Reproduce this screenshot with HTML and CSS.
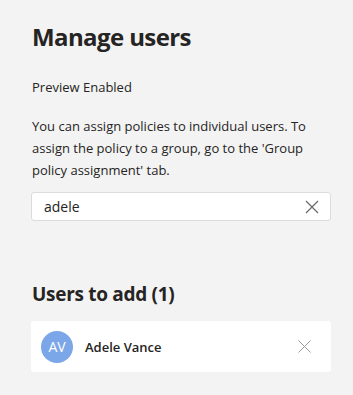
FILE: index.html
```html
<!DOCTYPE html>
<html lang="en">
<head>
    <meta charset="UTF-8">
    <meta name="viewport" content="width=device-width, initial-scale=1.0">
    <title>Manage users</title>
    <link rel="stylesheet" href="styles.css">
</head>
<body>
    <div class="panel">
        <h1 class="title">Manage users</h1>
        <p class="preview">Preview Enabled</p>
        <p class="intro">You can assign policies to individual users. To assign the policy to a group, go to the 'Group policy assignment' tab.</p>

        <div class="search">
            <input class="search-input" type="text" value="adele">
            <button class="clear-btn" aria-label="Clear">
                <svg width="14" height="14" viewBox="0 0 14 14"><path d="M1 1L13 13M13 1L1 13" stroke="#6b6b6b" stroke-width="1.3" fill="none"/></svg>
            </button>
        </div>

        <h2 class="subtitle">Users to add (1)</h2>
        <div class="user-card">
            <div class="avatar">AV</div>
            <div class="user-name">Adele Vance</div>
            <button class="remove-btn" aria-label="Remove">
                <svg width="13" height="13" viewBox="0 0 13 13"><path d="M0.5 0.5L12.5 12.5M12.5 0.5L0.5 12.5" stroke="#9a9a9a" stroke-width="1" fill="none"/></svg>
            </button>
        </div>
    </div>
</body>
</html>
```

FILE: styles.css
```css
body {
    margin: 0;
    background: #f3f3f3;
    font-family: "Open Sans", "Noto Sans", Arial, sans-serif;
    color: #252423;
}
.panel {
    width: 300px;
    padding: 21px 22px 0 31px;
}
.title {
    margin: 0 0 0 1px;
    font-size: 24px;
    font-weight: 700;
    letter-spacing: -0.6px;
    line-height: 32px;
}
.preview {
    margin: 24px 0 0 1px;
    font-size: 13px;
    line-height: 20px;
}
.intro {
    margin: 18px 0 0 1px;
    font-size: 13px;
    line-height: 22px;
}
.search {
    margin-top: 11px;
    height: 27px;
    display: flex;
    align-items: center;
    background: white;
    border: 1px solid #dcdcdc;
    border-radius: 3px;
}
.search-input {
    flex: 1;
    border: none;
    outline: none;
    background: transparent;
    font-family: inherit;
    font-size: 14px;
    color: #252423;
    padding: 0 0 0 12px;
    height: 100%;
}
.clear-btn, .remove-btn {
    border: none;
    background: none;
    padding: 0;
    display: flex;
    cursor: pointer;
}
.clear-btn {
    margin-right: 11px;
}
.subtitle {
    margin: 60px 0 0 1px;
    font-size: 19px;
    font-weight: 700;
    letter-spacing: -0.3px;
    line-height: 26px;
}
.user-card {
    margin-top: 14px;
    height: 51px;
    display: flex;
    align-items: center;
    background: white;
    border-radius: 3px;
    padding: 0 20px 0 10px;
}
.avatar {
    width: 32px;
    height: 32px;
    border-radius: 50%;
    background: #7ba6e8;
    color: white;
    font-size: 14px;
    display: flex;
    align-items: center;
    justify-content: center;
}
.user-name {
    flex: 1;
    margin-left: 12px;
    font-size: 13px;
    font-weight: 600;
}
```
